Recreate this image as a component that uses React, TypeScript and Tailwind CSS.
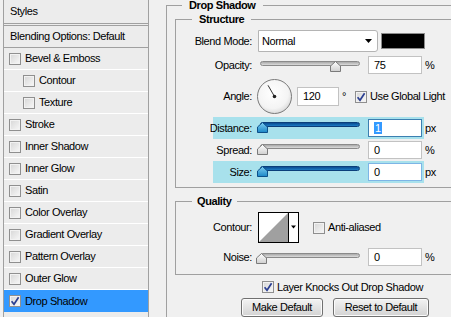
import React from 'react';

const F = "font-['Liberation_Sans',Arial,sans-serif] text-[11px] tracking-[-0.4px] text-black";

function Check({ checked }: { checked?: boolean }) {
  return (
    <span className="flex h-[12px] w-[12px] shrink-0 items-center justify-center border border-[#8f8f8f] bg-linear-to-br from-[#d6d6d6] to-[#f8f8f8] shadow-[inset_0_0_0_1px_#f2f2f2]">
      {checked && (
        <svg width="10" height="10" viewBox="0 0 10 10">
          <path d="M1.6 5.2 L4 8.2 L8.6 1.2" fill="none" stroke="#2b3f92" strokeWidth="1.7" />
        </svg>
      )}
    </span>
  );
}

function Thumb({ blue }: { blue?: boolean }) {
  return (
    <svg width="11" height="11" viewBox="0 0 11 11">
      <defs>
        <linearGradient id={blue ? 'tb' : 'tg'} x1="0" y1="0" x2="0" y2="1">
          <stop offset="0" stopColor={blue ? '#7fd0f2' : '#ffffff'} />
          <stop offset="1" stopColor={blue ? '#1b86c6' : '#cfcfcf'} />
        </linearGradient>
      </defs>
      <path
        d="M0.5 10.5 V5 L5.5 0.5 L10.5 5 V10.5 Z"
        fill={blue ? 'url(#tb)' : 'url(#tg)'}
        stroke={blue ? '#0c4f8a' : '#7a7a7a'}
      />
    </svg>
  );
}

function Slider({ blue, thumbCls }: { blue?: boolean; thumbCls: string }) {
  return (
    <div className="relative ml-[6px] w-[104px] self-stretch">
      <div
        className={`mt-[5px] ml-[2px] h-[5px] w-[100px] rounded-full border ${
          blue
            ? 'border-[#0b3f7a] bg-linear-to-b from-[#0a4c92] to-[#1d7cc4]'
            : 'border-[#8a8a8a] bg-linear-to-b from-[#a9a9a9] to-[#dcdcdc]'
        }`}
      />
      <div className={`absolute top-[5px] ${thumbCls}`}>
        <Thumb blue={blue} />
      </div>
    </div>
  );
}

function SliderRow({
  label,
  value,
  unit,
  band,
  thumbCls,
  rowCls,
  inputBorder,
  selected,
}: {
  label: string;
  value: string;
  unit: string;
  band?: boolean;
  thumbCls: string;
  rowCls: string;
  inputBorder: string;
  selected?: boolean;
}) {
  return (
    <div className={`flex ${rowCls}`}>
      <div className="w-[37px] shrink-0" />
      <div className={`flex w-[211px] shrink-0 items-center pr-[2px] ${band ? 'bg-[#a8e1ec]' : ''}`}>
        <div className="flex w-[39px] shrink-0 justify-end whitespace-nowrap">{label}</div>
        <Slider blue={band} thumbCls={thumbCls} />
        <div className={`ml-[6px] flex h-[18px] w-[54px] shrink-0 items-center border bg-white pl-[5px] ${inputBorder}`}>
          {selected ? <span className="bg-[#3399ff] px-[1px] leading-[12px] text-white">{value}</span> : value}
        </div>
      </div>
      <div className="ml-[1px] flex items-center">{unit}</div>
    </div>
  );
}

const layers: { label: string; sub?: boolean }[] = [
  { label: 'Bevel & Emboss' },
  { label: 'Contour', sub: true },
  { label: 'Texture', sub: true },
  { label: 'Stroke' },
  { label: 'Inner Shadow' },
  { label: 'Inner Glow' },
  { label: 'Satin' },
  { label: 'Color Overlay' },
  { label: 'Gradient Overlay' },
  { label: 'Pattern Overlay' },
  { label: 'Outer Glow' },
];

export default function App() {
  return (
    <div className={`flex h-[317px] w-[451px] overflow-hidden bg-[#f0f0f0] ${F}`}>
      {/* Left styles list */}
      <div className="ml-[3px] flex h-full w-[146px] shrink-0 flex-col border-x border-[#a0a0a0] bg-[#ececec]">
        <div className="flex h-[26px] shrink-0 items-center border-b-[3px] border-double border-[#a0a0a0] pl-[6px]">
          Styles
        </div>
        <div className="flex h-[22px] shrink-0 items-center border-b border-[#a0a0a0] pl-[6px]">
          Blending Options: Default
        </div>
        {layers.map((l) => (
          <div
            key={l.label}
            className={`flex h-[22px] shrink-0 items-center gap-[4px] border-b border-white ${l.sub ? 'pl-[19px]' : 'pl-[5px]'}`}
          >
            <Check />
            <span>{l.label}</span>
          </div>
        ))}
        <div className="flex h-[22px] shrink-0 items-center gap-[4px] bg-[#3399ff] pl-[5px]">
          <Check checked />
          <span>Drop Shadow</span>
        </div>
      </div>

      {/* Right settings */}
      <div className="h-full min-w-0 flex-1 overflow-hidden pl-[17px]">
        <fieldset className="w-[420px] min-w-0 border border-[#a0a0a0] pb-[40px]">
          <legend className="ml-[15px] px-[7px] font-bold leading-[11px]">Drop Shadow</legend>

          <fieldset className="mt-[3px] ml-[8px] w-[400px] min-w-0 border border-[#a0a0a0] pb-[4px]">
            <legend className="ml-[16px] px-[7px] font-bold leading-[11px]">Structure</legend>

            {/* Blend mode */}
            <div className="mt-[5px] flex h-[22px] items-center">
              <div className="flex w-[76px] shrink-0 justify-end whitespace-nowrap">Blend Mode:</div>
              <div className="ml-[6px] flex h-[22px] w-[120px] items-center justify-between rounded-r-[3px] border border-[#b4b4b4] bg-white pl-[3px] pr-[5px]">
                <span>Normal</span>
                <svg width="7" height="4" viewBox="0 0 7 4">
                  <path d="M0 0H7L3.5 4Z" fill="#000" />
                </svg>
              </div>
              <div className="ml-[3px] h-[16px] w-[44px] border border-[#8c8c8c] bg-black" />
            </div>

            <SliderRow
              label="Opacity:"
              value="75"
              unit="%"
              thumbCls="left-[72px]"
              rowCls="mt-[4px] h-[18px]"
              inputBorder="border-[#c2c2c2]"
            />

            {/* Angle */}
            <div className="mt-[5px] flex h-[35px] items-center">
              <div className="flex w-[76px] shrink-0 justify-end">Angle:</div>
              <svg className="ml-[5px] shrink-0" width="35" height="35" viewBox="0 0 35 35">
                <defs>
                  <radialGradient id="dial" cx="45%" cy="40%" r="65%">
                    <stop offset="0" stopColor="#ffffff" />
                    <stop offset="0.7" stopColor="#f4f4f4" />
                    <stop offset="1" stopColor="#d4d4d4" />
                  </radialGradient>
                </defs>
                <circle cx="17.5" cy="17.5" r="17" fill="url(#dial)" stroke="#7a7a7a" />
                <line x1="17.5" y1="17.5" x2="11" y2="6.3" stroke="#333" strokeWidth="1" />
                <circle cx="17.5" cy="17.5" r="1.8" fill="#222" />
              </svg>
              <div className="ml-[5px] flex h-[19px] w-[42px] shrink-0 items-center border border-[#c2c2c2] bg-white pl-[5px]">
                120
              </div>
              <span className="ml-[3px]">°</span>
              <div className="ml-[9px]">
                <Check checked />
              </div>
              <span className="ml-[3px] whitespace-nowrap">Use Global Light</span>
            </div>

            <SliderRow
              label="Distance:"
              value="1"
              unit="px"
              band
              selected
              thumbCls="left-[-1px]"
              rowCls="mt-[3px] h-[22px]"
              inputBorder="border-[#3c7fb1]"
            />
            <SliderRow
              label="Spread:"
              value="0"
              unit="%"
              thumbCls="left-[-1px]"
              rowCls="h-[22px]"
              inputBorder="border-[#c2c2c2]"
            />
            <SliderRow
              label="Size:"
              value="0"
              unit="px"
              band
              thumbCls="left-[-1px]"
              rowCls="h-[22px]"
              inputBorder="border-[#7db5e6]"
            />
          </fieldset>

          <fieldset className="mt-[8px] ml-[8px] w-[400px] min-w-0 border border-[#a0a0a0] pb-[8px]">
            <legend className="ml-[16px] px-[5px] font-bold leading-[11px]">Quality</legend>

            <div className="mt-[5px] flex h-[31px] items-center">
              <div className="flex w-[76px] shrink-0 justify-end">Contour:</div>
              <svg className="ml-[6px] shrink-0" width="41" height="31" viewBox="0 0 41 31">
                <rect x="0.5" y="0.5" width="40" height="30" fill="#fff" stroke="#000" />
                <path d="M1 30 L30 1 V30 Z" fill="#a0a0a0" />
                <line x1="30.5" y1="1" x2="30.5" y2="30" stroke="#000" />
                <path d="M33 13.5 H38 L35.5 16.5 Z" fill="#000" />
              </svg>
              <div className="ml-[14px]">
                <Check />
              </div>
              <span className="ml-[3px]">Anti-aliased</span>
            </div>

            <SliderRow
              label="Noise:"
              value="0"
              unit="%"
              thumbCls="left-[-2px]"
              rowCls="mt-[5px] h-[18px]"
              inputBorder="border-[#c2c2c2]"
            />
          </fieldset>

          <div className="mt-[6px] ml-[95px] flex h-[12px] items-center">
            <Check checked />
            <span className="ml-[3px] whitespace-nowrap">Layer Knocks Out Drop Shadow</span>
          </div>

          <div className="mt-[5px] flex">
            <button className="ml-[74px] flex h-[19px] w-[82px] items-center justify-center rounded-[3px] border border-[#707070] bg-linear-to-b from-[#f3f3f3] to-[#d3d3d3] shadow-[inset_0_0_0_1px_#fbfbfb]">
              Make Default
            </button>
            <button className="ml-[10px] flex h-[19px] w-[96px] items-center justify-center rounded-[3px] border border-[#707070] bg-linear-to-b from-[#f3f3f3] to-[#d3d3d3] shadow-[inset_0_0_0_1px_#fbfbfb]">
              Reset to Default
            </button>
          </div>
        </fieldset>
      </div>
    </div>
  );
}
